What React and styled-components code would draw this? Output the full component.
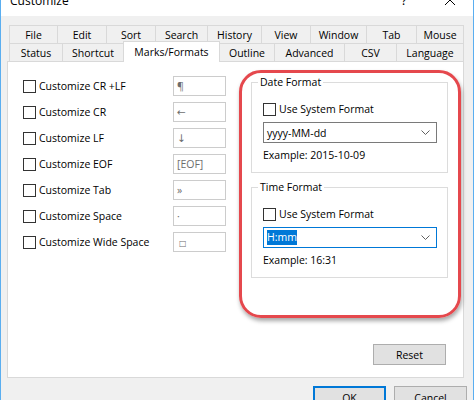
import styled, { createGlobalStyle, css } from 'styled-components';

const GlobalStyle = createGlobalStyle`
  html, body {
    margin: 0;
    padding: 0;
    background: #f0f0f0;
  }
  body {
    font-family: "Open Sans", "Noto Sans", "DejaVu Sans", sans-serif;
    font-size: 10.5px;
    color: #000;
  }
`;

const rowOne = [
  { label: 'File', w: 48 },
  { label: 'Edit', w: 49 },
  { label: 'Sort', w: 49 },
  { label: 'Search', w: 52 },
  { label: 'History', w: 54 },
  { label: 'View', w: 49 },
  { label: 'Window', w: 56 },
  { label: 'Tab', w: 50 },
  { label: 'Mouse', w: 48 },
];

const rowTwo = [
  { label: 'Status', w: 53 },
  { label: 'Shortcut', w: 61 },
  { label: 'Marks/Formats', w: 96, active: true },
  { label: 'Outline', w: 55 },
  { label: 'Advanced', w: 70 },
  { label: 'CSV', w: 52 },
  { label: 'Language', w: 68 },
];

const marks = [
  { label: 'Customize CR +LF', value: '¶' },
  { label: 'Customize CR', value: '←' },
  { label: 'Customize LF', value: '↓' },
  { label: 'Customize EOF', value: '[EOF]' },
  { label: 'Customize Tab', value: '»' },
  { label: 'Customize Space', value: '·' },
  { label: 'Customize Wide Space', value: '□', small: true },
];

const Window = styled.div`
  box-sizing: border-box;
  width: 474px;
  height: 400px;
  overflow: hidden;
  border-left: 1px solid #5aaef0;
  border-right: 1px solid #5aaef0;
  background: #f0f0f0;
  display: flex;
  flex-direction: column;
`;

const TitleBar = styled.div`
  flex-shrink: 0;
  height: 16px;
  overflow: hidden;
  background: #fff;
`;

const TitleRow = styled.div`
  display: flex;
  align-items: center;
  height: 30px;
  margin-top: -15px;
  padding-left: 9px;
`;

const TitleText = styled.span`
  flex: 1;
  font-size: 12px;
`;

const TitleButton = styled.span`
  width: 46px;
  display: flex;
  justify-content: center;
  align-items: center;
  font-size: 13px;
`;

const Body = styled.div`
  padding: 9px 0 0 6px;
`;

const TabStrip = styled.div`
  margin-left: 2px;
  width: 454px;
`;

const TabRow = styled.div`
  display: flex;
  align-items: flex-start;
  height: 18px;
`;

const Tab = styled.div`
  box-sizing: border-box;
  flex-shrink: 0;
  width: ${p => p.$w}px;
  height: 18px;
  border: 1px solid #d9d9d9;
  border-bottom: none;
  border-right: ${p => (p.$last ? '1px solid #d9d9d9' : 'none')};
  background: #f0f0f0;
  display: flex;
  align-items: center;
  justify-content: center;
  white-space: nowrap;
  ${p =>
    p.$active &&
    css`
      position: relative;
      z-index: 1;
      width: ${p.$w + 1}px;
      height: 21px;
      margin: -2px -1px -1px 0;
      border-right: 1px solid #d9d9d9;
      background: #fff;
    `}
`;

const Panel = styled.div`
  box-sizing: border-box;
  width: 457px;
  height: 317px;
  border: 1px solid #d9d9d9;
  background: #fff;
  display: flex;
  flex-direction: column;
`;

const PanelMain = styled.div`
  display: flex;
  align-items: flex-start;
  padding: 8px 2px 0 15px;
`;

const MarkList = styled.div`
  margin-top: 6px;
  display: flex;
  flex-direction: column;
  gap: 6px;
`;

const MarkRow = styled.div`
  display: grid;
  grid-template-columns: 150px 53px;
  align-items: center;
  height: 20px;
`;

const CheckLabel = styled.label`
  display: flex;
  align-items: center;
  gap: 3px;
  height: 16px;
  white-space: nowrap;
`;

const CheckBox = styled.span`
  box-sizing: border-box;
  flex-shrink: 0;
  width: 13px;
  height: 13px;
  border: 1px solid #333;
  background: #fff;
`;

const MarkBox = styled.div`
  box-sizing: border-box;
  height: 20px;
  border: 1px solid #cccccc;
  padding-left: ${p => (p.$small ? 5 : 3)}px;
  display: flex;
  align-items: center;
  color: #6d6d6d;
  font-family: "Open Sans", "DejaVu Sans", sans-serif;
  font-size: ${p => (p.$small ? 8 : 10.5)}px;
`;

const Highlight = styled.div`
  box-sizing: border-box;
  margin-left: auto;
  width: 222px;
  height: 248px;
  padding: 1px 10px 0 9px;
  border: 3px solid #e5484d;
  border-radius: 22px;
  box-shadow: 1px 3px 4px rgba(0, 0, 0, 0.35);
  display: flex;
  flex-direction: column;
`;

const Group = styled.fieldset`
  margin: ${p => (p.$first ? '0' : '6px 0 0')};
  padding: 0 10px 9px 6px;
  min-width: 0;
  border: 1px solid #dcdcdc;
`;

const Legend = styled.legend`
  padding: 0 2px;
  line-height: 16px;
`;

const GroupBody = styled.div`
  display: flex;
  flex-direction: column;
  padding: 11px 0 0 5px;
`;

const Combo = styled.div`
  box-sizing: border-box;
  margin-top: 5px;
  height: 21px;
  padding: 0 6px 0 3px;
  border: 1px solid ${p => (p.$focused ? '#0078d7' : '#7a7a7a')};
  background: #fff;
  display: flex;
  align-items: center;
  justify-content: space-between;
`;

const Selected = styled.span`
  background: #0078d7;
  color: #fff;
  line-height: 15px;
`;

const Example = styled.div`
  margin-top: 4px;
  line-height: 16px;
`;

const PanelFooter = styled.div`
  margin-top: auto;
  display: flex;
  justify-content: flex-end;
  padding: 0 17px 12px 0;
`;

const Button = styled.button`
  box-sizing: border-box;
  width: 73px;
  height: ${p => (p.$tall ? 23 : 21)}px;
  padding: 0;
  border: 1px solid ${p => (p.$default ? '#0078d7' : '#adadad')};
  box-shadow: ${p => (p.$default ? 'inset 0 0 0 1px #0078d7' : 'none')};
  background: #e1e1e1;
  color: #000;
  font: inherit;
`;

const DialogButtons = styled.div`
  display: flex;
  justify-content: flex-end;
  gap: 8px;
  padding: 8px 6px 0 0;
`;

const Chevron = () => (
  <svg width="9" height="5" viewBox="0 0 9 5">
    <polyline points="0.5,0.5 4.5,4.5 8.5,0.5" fill="none" stroke="#606060" strokeWidth="1" />
  </svg>
);

const CloseIcon = () => (
  <svg width="10" height="10" viewBox="0 0 10 10">
    <path d="M0 0L10 10M10 0L0 10" stroke="#000" strokeWidth="1" />
  </svg>
);

const FormatGroup = ({ title, value, example, focused, first }) => (
  <Group $first={first}>
    <Legend>{title}</Legend>
    <GroupBody>
      <CheckLabel>
        <CheckBox />
        Use System Format
      </CheckLabel>
      <Combo $focused={focused}>
        {focused ? <Selected>{value}</Selected> : <span>{value}</span>}
        <Chevron />
      </Combo>
      <Example>Example: {example}</Example>
    </GroupBody>
  </Group>
);

const App = () => {
  return (
    <Window>
      <GlobalStyle />
      <TitleBar>
        <TitleRow>
          <TitleText>Customize</TitleText>
          <TitleButton>?</TitleButton>
          <TitleButton>
            <CloseIcon />
          </TitleButton>
        </TitleRow>
      </TitleBar>
      <Body>
        <TabStrip>
          <TabRow>
            {rowOne.map((t, i) => (
              <Tab key={t.label} $w={t.w} $last={i === rowOne.length - 1}>
                {t.label}
              </Tab>
            ))}
          </TabRow>
          <TabRow>
            {rowTwo.map((t, i) => (
              <Tab key={t.label} $w={t.w} $active={t.active} $last={i === rowTwo.length - 1}>
                {t.label}
              </Tab>
            ))}
          </TabRow>
        </TabStrip>
        <Panel>
          <PanelMain>
            <MarkList>
              {marks.map(m => (
                <MarkRow key={m.label}>
                  <CheckLabel>
                    <CheckBox />
                    {m.label}
                  </CheckLabel>
                  <MarkBox $small={m.small}>{m.value}</MarkBox>
                </MarkRow>
              ))}
            </MarkList>
            <Highlight>
              <FormatGroup first title="Date Format" value="yyyy-MM-dd" example="2015-10-09" />
              <FormatGroup focused title="Time Format" value="H:mm" example="16:31" />
            </Highlight>
          </PanelMain>
          <PanelFooter>
            <Button>Reset</Button>
          </PanelFooter>
        </Panel>
        <DialogButtons>
          <Button $tall $default>OK</Button>
          <Button $tall>Cancel</Button>
        </DialogButtons>
      </Body>
    </Window>
  );
};

export default App;
